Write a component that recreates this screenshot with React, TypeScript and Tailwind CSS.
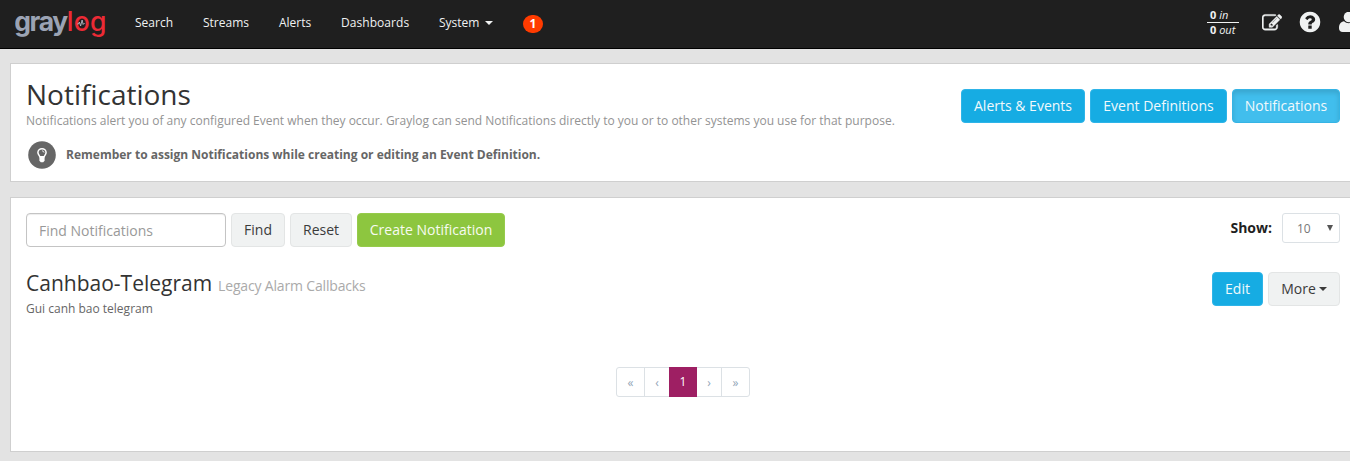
import React from "react";

function Logo() {
  return (
    <svg width="100" height="44" viewBox="0 0 100 44" aria-label="graylog" className="block shrink-0">
      <text x="-0.8" y="30.5" fontFamily="Inter, sans-serif" fontWeight="650" fontSize="26.500" fill="#9ba3b4" textLength="54" lengthAdjust="spacing">gray</text>
      <text x="51.800" y="30.5" fontFamily="Inter, sans-serif" fontWeight="500" fontSize="26.500" fill="#ec2a35" textLength="39.500" lengthAdjust="spacing">log</text>
      <path d="M62.200 24h1.200l1-2 1.200 4 1.500-6 1 4.500 .7-1h.8" fill="none" stroke="#b4bac6" strokeWidth="0.900" />
    </svg>
  );
}

function EditIcon() {
  return (
    <svg width="20" height="20" viewBox="0 0 1792 1792" fill="#f0f2f2" className="block">
      <path d="M888 1184l116-116-152-152-116 116v56h96v96h56zm440-720q-16-16-33 1l-350 350q-17 17-1 33t33-1l350-350q17-17 1-33zm80 594v190q0 119-84.5 203.5t-203.5 84.5h-832q-119 0-203.5-84.5t-84.5-203.5v-832q0-119 84.5-203.5t203.5-84.5h832q63 0 117 25 15 7 18 23 3 17-9 29l-49 49q-14 14-32 8-23-6-45-6h-832q-66 0-113 47t-47 113v832q0 66 47 113t113 47h832q66 0 113-47t47-113v-126q0-13 9-22l64-64q15-15 35-7t20 29zm-96-738l288 288-672 672h-288v-288zm444 132l-92 92-288-288 92-92q28-28 68-28t68 28l152 152q28 28 28 68t-28 68z" stroke="#f0f2f2" strokeWidth="40" />
    </svg>
  );
}

function HelpIcon() {
  return (
    <svg width="24" height="24" viewBox="0 0 1792 1792" fill="#f0f2f2" className="block">
      <path d="M1024 1376v-192q0-14-9-23t-23-9h-192q-14 0-23 9t-9 23v192q0 14 9 23t23 9h192q14 0 23-9t9-23zm256-672q0-88-55.500-163t-138.500-116-170-41q-243 0-371 213-15 24 8 42l132 100q7 6 19 6 16 0 25-12 53-68 86-92 34-24 86-24 48 0 85.500 26t37.500 59q0 38-20 61t-68 45q-63 28-115.500 86.500t-52.500 125.500v36q0 14 9 23t23 9h192q14 0 23-9t9-23q0-19 21.500-49.500t54.500-49.500q32-18 49-28.500t46-35 44.500-48 28-60.500 12.500-81zm384 192q0 209-103 385.500t-279.500 279.500-385.500 103-385.500-103-279.500-279.500-103-385.500 103-385.500 279.500-279.500 385.500-103 385.500 103 279.500 279.500 103 385.500z" />
    </svg>
  );
}

function UserIcon() {
  return (
    <svg width="20" height="20" viewBox="0 0 20 20" fill="#f0f2f2" className="block shrink-0">
      <path d="M5 9.200C2 9.700 0 11.700 0 16.200C0 18.500 1.400 20 3.700 20h12.600c2.300 0 3.700-1.500 3.700-3.800 0-4.500-2-6.500-5-7C13.800 10.200 12 11.200 10 11.200S6.200 10.200 5 9.200Z" />
      <circle cx="10" cy="5" r="5.300" />
    </svg>
  );
}

function BulbIcon() {
  return (
    <svg width="28" height="28" viewBox="0 0 28 28" className="block shrink-0">
      <circle cx="14" cy="14" r="13.800" fill="#666" />
      <path d="M11.900 15.800C11.500 14.500 9.900 13.400 9.900 11.500A4.100 3.700 0 0 1 18.100 11.500C18.100 13.400 16.500 14.500 16.100 15.800Z" fill="none" stroke="#fff" strokeWidth="1.500" />
      <path d="M14 9.900c1.300 0 2 .7 2 1.700" fill="none" stroke="#fff" strokeWidth="0.900" />
      <path d="M11.400 15.500h5.200v4.300l-1.400 1.500h-2.400l-1.400-1.500Z" fill="#fff" />
    </svg>
  );
}

function Caret() {
  return <svg width="8" height="4" viewBox="0 0 8 4" className="inline-block shrink-0 fill-current"><path d="M0 0h8L4 4Z" /></svg>;
}

const btn = "h-[34px] rounded-[4px] border px-3 text-[14px] leading-[20px] whitespace-nowrap flex items-center justify-center pb-px";
const info = "border-[#2eb4e8] bg-[#16ace3] text-[#f1f9fc]";
const gray = "border-[#e3e5e5] bg-[#f0f2f2] text-[#3b3b3b]";

export default function App() {
  return (
    <div className="h-[461px] w-[1350px] overflow-hidden bg-[#e3e3e3] font-['Open_Sans',sans-serif] text-[12px] text-[#333]">
      <nav className="flex h-[49px] border-b border-black bg-[#1f1f1f] text-[#f0f2f2]">
        <div className="w-[120px] pl-[15px]"><Logo /></div>
        <div className="flex h-[45px] grow items-center pl-[15px] text-[12px]">
          <a className="w-[68px]">Search</a>
          <a className="w-[76px]">Streams</a>
          <a className="w-[62px]">Alerts</a>
          <a className="w-[97px] tracking-[0.05px]">Dashboards</a>
          <a className="flex w-[85px] items-center gap-[6px] pl-px">System <Caret /></a>
          <span className="mt-[3px] flex h-[18px] w-5 items-center justify-center rounded-[10px] bg-[#ff3b00] text-[12px] leading-none font-bold text-white">1</span>
        </div>
        <div className="flex w-[143px] shrink-0">
          <div className="mt-2 h-[30px] w-8 shrink-0 text-[11px] leading-[14px]">
            <div className="h-[15px] border-b border-[#f0f2f2] pl-[3px]"><b>0</b> <i>in</i></div>
            <div className="pl-[3px] whitespace-nowrap"><b>0</b> <i>out</i></div>
          </div>
          <div className="mt-[13px] ml-[23px] shrink-0"><EditIcon /></div>
          <div className="mt-[10px] ml-[16px] shrink-0"><HelpIcon /></div>
          <div className="mt-[12px] ml-[17px] shrink-0"><UserIcon /></div>
        </div>
      </nav>

      <section className="mt-[14px] ml-[10px] flex h-[119px] justify-between border border-r-0 border-[#cfcfcf] bg-white pr-[10px] pl-[15px]">
        <div className="pt-[13px]">
          <h1 className="h-[35px] text-[28px] leading-[34px] font-normal text-[#333]">Notifications</h1>
          <p className="text-[12px] leading-[17px] text-[#939393]">Notifications alert you of any configured Event when they occur. Graylog can send Notifications directly to you or to other systems you use for that purpose.</p>
          <div className="mt-[12px] ml-[2px] flex items-center gap-[10px]">
            <BulbIcon />
            <strong className="text-[12px] font-bold text-[#666]">Remember to assign Notifications while creating or editing an Event Definition.</strong>
          </div>
        </div>
        <div className="flex gap-[5px] pt-[25px]">
          <button className={`${btn} ${info} w-[124px]`}>Alerts &amp; Events</button>
          <button className={`${btn} ${info} w-[137px]`}>Event Definitions</button>
          <button className={`${btn} w-[108px] border-[#35b4e5] bg-[#41beed] text-[#f1f9fc] shadow-[inset_0_3px_5px_rgba(0,0,0,0.125)]`}>Notifications</button>
        </div>
      </section>

      <section className="mt-[15px] ml-[10px] h-[255px] border border-r-0 border-[#cfcfcf] bg-white pt-[15px] pr-[10px] pl-[15px]">
        <div className="flex h-[34px] gap-[5px]">
          <input className="h-[34px] w-[200px] rounded-[4px] border border-[#c4c4c4] px-3 text-[14px] shadow-[inset_0_1px_1px_rgba(0,0,0,0.075)] placeholder:text-[#999]" placeholder="Find Notifications" />
          <button className={`${btn} ${gray} w-[54px]`}>Find</button>
          <button className={`${btn} ${gray} w-[62px]`}>Reset</button>
          <button className={`${btn} w-[148px] border-[#96cb4b] bg-[#8dc63f] text-[#f7fbf1]`}>Create Notification</button>
          <div className="ml-auto flex h-[30px] items-center gap-[10px]">
            <b className="pb-[2px] text-[14px] text-[#1f1f1f]">Show:</b>
            <div className="flex h-[30px] w-[58px] items-center justify-between rounded-[3px] border border-[#dce1e5] pr-[6px] pl-[14px] text-[12px] text-[#777]">
              <span className="pt-[2px]">10</span>
              <svg width="6" height="6" viewBox="0 0 6 6" className="fill-[#555]"><path d="M0 0h6L3 6Z" /></svg>
            </div>
          </div>
        </div>

        <div className="mt-[25px] flex justify-between">
          <div>
            <h2 className="flex h-[24px] items-baseline gap-[6px] text-[21px] leading-[23px] font-normal text-[#333]">
              Canhbao-Telegram
              <small className="text-[14px] tracking-[-0.17px] text-[#aaa]">Legacy Alarm Callbacks</small>
            </h2>
            <p className="mt-[4px] text-[12px] leading-[17px] text-[#666]">Gui canh bao telegram</p>
          </div>
          <div className="flex gap-[5px]">
            <button className={`${btn} ${info} w-[51px]`}>Edit</button>
            <button className={`${btn} ${gray} w-[72px] gap-[3px]`}>More <Caret /></button>
          </div>
        </div>

        <div className="mt-[50px] ml-[590px] flex h-[30px] w-[134px] rounded-[3px] border border-[#dce1e5] text-[12px] text-[#93a6b8]">
          <span className="flex w-[27px] items-center justify-center pt-px">«</span>
          <span className="flex w-[25px] items-center justify-center border-l border-[#dce1e5] pt-px">‹</span>
          <span className="-my-px flex w-[28px] items-center justify-center bg-[#9e1f63] text-white">1</span>
          <span className="flex w-[25px] items-center justify-center border-r border-[#dce1e5] pt-px">›</span>
          <span className="flex w-[27px] items-center justify-center pt-px">»</span>
        </div>
      </section>
    </div>
  );
}
